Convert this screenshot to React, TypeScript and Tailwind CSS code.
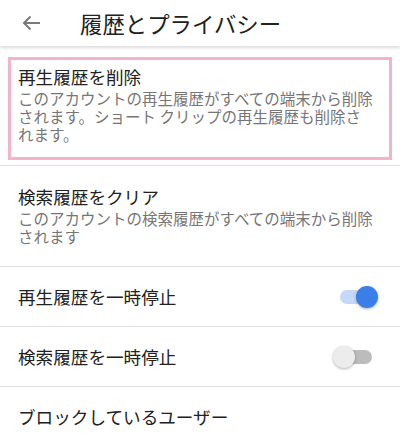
import React from 'react';

const Toggle: React.FC<{ on: boolean }> = ({ on }) => {
  return (
    <div className="relative w-[45px] h-[22px] shrink-0">
      <div
        className={
          on
            ? 'absolute left-[7px] right-[6px] top-[4px] h-[14px] rounded-full bg-[#c5d9fb]'
            : 'absolute left-[7px] right-[6px] top-[4px] h-[14px] rounded-full bg-[#bcbcbc]'
        }
      />
      <div
        className={
          on
            ? 'absolute right-0 top-0 w-[22px] h-[22px] rounded-full bg-[#3a7ee9] shadow-[0_1px_3px_rgba(0,0,0,0.3)]'
            : 'absolute left-0 top-0 w-[22px] h-[22px] rounded-full bg-[#ececec] shadow-[0_1px_3px_rgba(0,0,0,0.3)]'
        }
      />
    </div>
  );
};

const App: React.FC = () => {
  return (
    <div
      className="w-[400px] h-[445px] bg-white overflow-hidden"
      style={{ fontFamily: '"Noto Sans CJK JP", "Noto Sans", sans-serif' }}
    >
      {/* header */}
      <div className="relative z-10 h-[46px] flex items-center bg-white shadow-[0_2px_3px_rgba(0,0,0,0.14)]">
        <div className="w-[80px] pl-[22px] flex items-center">
          <svg width="18" height="16" viewBox="0 0 18 16" fill="none" stroke="#7a7a7a" strokeWidth="2">
            <path d="M18 8H2" />
            <path d="M8.5 1.5L2 8l6.5 6.5" />
          </svg>
        </div>
        <span className="text-[22.4px] leading-[28px] text-[#212121]">履歴とプライバシー</span>
      </div>

      {/* delete watch history (highlighted) */}
      <div className="relative pl-[18px] pr-[24px] pt-[19px] pb-[22px] border-b border-[#e2e2e2]">
        <div className="text-[17.6px] leading-[24px] text-[#212121]">再生履歴を削除</div>
        <div className="text-[15.5px] leading-[18px] text-[#767676]">
          このアカウントの再生履歴がすべての端末から削除されます。ショート クリップの再生履歴も削除されます。
        </div>
        <div className="absolute left-2 right-2 top-[11px] bottom-[5px] border-[3px] border-[#f3b4cb] pointer-events-none" />
      </div>

      {/* clear search history */}
      <div className="pl-[18px] pr-[24px] pt-[19px] pb-[21px] border-b border-[#e2e2e2]">
        <div className="text-[17.6px] leading-[24px] text-[#212121]">検索履歴をクリア</div>
        <div className="text-[15.5px] leading-[18px] text-[#767676]">
          このアカウントの検索履歴がすべての端末から削除されます
        </div>
      </div>

      {/* pause watch history */}
      <div className="h-[60px] flex items-center justify-between pl-[18px] pr-[22px] border-b border-[#e2e2e2]">
        <span className="text-[17.6px] leading-[24px] text-[#212121]">再生履歴を一時停止</span>
        <Toggle on={true} />
      </div>

      {/* pause search history */}
      <div className="h-[60px] flex items-center justify-between pl-[18px] pr-[22px] border-b border-[#e2e2e2]">
        <span className="text-[17.6px] leading-[24px] text-[#212121]">検索履歴を一時停止</span>
        <Toggle on={false} />
      </div>

      {/* blocked users */}
      <div className="h-[60px] flex items-center pl-[18px]">
        <span className="text-[17.6px] leading-[24px] text-[#212121]">ブロックしているユーザー</span>
      </div>
    </div>
  );
};

export default App;
